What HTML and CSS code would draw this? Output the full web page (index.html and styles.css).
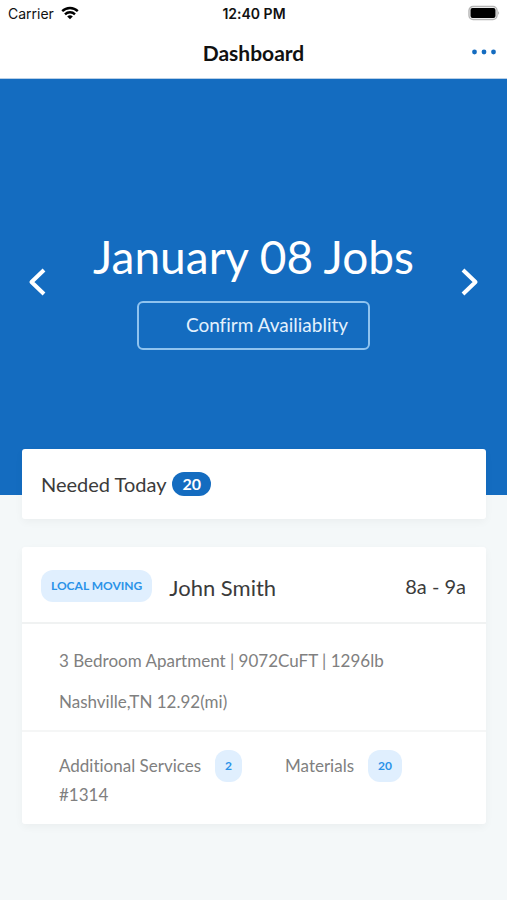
FILE: index.html
```html
<!DOCTYPE html>
<html lang="en">
<head>
    <meta charset="UTF-8">
    <meta name="viewport" content="width=device-width, initial-scale=1.0">
    <title>Dashboard</title>
    <link rel="stylesheet" href="styles.css">
</head>
<body>
    <div class="status">
        <span class="carrier">Carrier
            <svg width="18" height="14" viewBox="0 0 18 14" fill="none" stroke="#000" stroke-width="2.4">
                <path d="M1.2 5.1a11.2 11.2 0 0 1 15.6 0M4 8.3a7.2 7.2 0 0 1 10 0"/>
                <path d="M9 13.2 6.2 10.5a4 4 0 0 1 5.6 0z" fill="#000" stroke="none"/>
            </svg>
        </span>
        <span class="time">12:40 PM</span>
        <svg class="battery" width="32" height="16" viewBox="0 0 32 16">
            <rect x="1" y="1.5" width="28" height="13" rx="4" fill="#fff" stroke="#b5b5b5" stroke-width="1.4"/>
            <rect x="2.5" y="3" width="25" height="10" rx="2" fill="#000"/>
            <path d="M30.3 6q1.7 2 0 4z" fill="#999"/>
        </svg>
    </div>
    <header class="topbar">
        <h1>Dashboard</h1>
        <button class="more" aria-label="More">
            <svg width="24" height="6" viewBox="0 0 24 6" fill="#146cc0">
                <circle cx="2.5" cy="3" r="2.4"/><circle cx="12" cy="3" r="2.4"/><circle cx="21.5" cy="3" r="2.4"/>
            </svg>
        </button>
    </header>

    <section class="hero">
        <button class="arrow" aria-label="Previous day">
            <svg width="18" height="28" viewBox="0 0 18 28" fill="none" stroke="#fff" stroke-width="4" stroke-linejoin="round"><path d="M16 2 3.5 14 16 26"/></svg>
        </button>
        <div class="day">
            <h2>January 08 Jobs</h2>
            <button class="confirm">Confirm Availiablity</button>
        </div>
        <button class="arrow" aria-label="Next day">
            <svg width="18" height="28" viewBox="0 0 18 28" fill="none" stroke="#fff" stroke-width="4" stroke-linejoin="round"><path d="M2 2 14.5 14 2 26"/></svg>
        </button>
    </section>

    <main>
        <section class="card needed">
            <span>Needed Today</span>
            <span class="count">20</span>
        </section>

        <section class="card job">
            <div class="job-head">
                <span class="tag">LOCAL MOVING</span>
                <h3>John Smith</h3>
                <span class="hours">8a - 9a</span>
            </div>
            <div class="details">
                <p>3 Bedroom Apartment | 9072CuFT | 1296lb</p>
                <p>Nashville,TN 12.92(mi)</p>
            </div>
            <div class="extras">
                <div class="services">
                    <div class="extra">Additional Services <span class="tag">2</span></div>
                    <div>#1314</div>
                </div>
                <div class="extra">Materials <span class="tag">20</span></div>
            </div>
        </section>
    </main>
</body>
</html>
```

FILE: styles.css
```css
*{
    box-sizing:border-box;
}

body{
    margin:0;
    background-color:#f4f8f9;
    font-family:Lato, sans-serif;
    font-variant-ligatures:none;
    color:#3b3b3b;
}

h1,h2,h3,p{
    margin:0;
    font-weight:normal;
}

button{
    padding:0;
    border:none;
    background:none;
    font-family:inherit;
    font-variant-ligatures:none;
    cursor:pointer;
}

svg{
    display:block;
}

.status{
    display:grid;
    grid-template-columns:1fr auto 1fr;
    align-items:center;
    height:26px;
    padding:0 7px 0 8px;
    background-color:white;
    color:#111;
    font-family:Inter, sans-serif;
    font-size:14px;
}

.carrier{
    display:flex;
    align-items:center;
    gap:7px;
}

.time{
    font-weight:600;
}

.battery{
    justify-self:end;
}

.topbar{
    display:grid;
    grid-template-columns:1fr auto 1fr;
    align-items:center;
    height:53px;
    padding:0 11px;
    background-color:white;
    border-bottom:1px solid #b8cfe6;
}

.topbar h1{
    grid-column:2;
    font-size:21px;
    font-weight:bold;
    color:#111;
}

.more{
    justify-self:end;
}

.hero{
    display:flex;
    justify-content:space-between;
    align-items:center;
    padding:134px 28px 145px;
    background-color:#146cc0;
    color:white;
}

.day{
    display:flex;
    flex-direction:column;
    align-items:center;
}

.day h2{
    font-size:46px;
    line-height:88px;
}

.confirm{
    height:49px;
    padding:0 20px 2px 47px;
    border:2px solid #8fc3ef;
    border-radius:6px;
    color:#e3f1fd;
    font-size:19px;
}

main{
    padding:0 21px 40px 22px;
}

.card{
    background-color:white;
    border-radius:3px;
    box-shadow:0 3px 8px rgba(0,0,0,0.04);
}

.needed{
    display:flex;
    align-items:center;
    gap:6px;
    height:70px;
    margin-top:-46px;
    margin-bottom:28px;
    padding:0 19px;
    font-size:20px;
}

.count{
    padding:0 10px;
    border-radius:12px;
    background-color:#146cc0;
    color:white;
    font-size:16px;
    font-weight:bold;
    line-height:24px;
}

.job-head{
    display:flex;
    align-items:center;
    height:77px;
    padding:2px 20px 0 19px;
    border-bottom:2px solid #f0f2f2;
}

.tag{
    padding:0 10px;
    border-radius:12px;
    background-color:#e0effe;
    color:#2b93e8;
    font-size:12px;
    font-weight:bold;
    line-height:32px;
}

.job-head h3{
    margin-left:17px;
    padding-top:4px;
    font-size:22px;
}

.hours{
    margin-left:auto;
    font-size:20px;
}

.details,.extras{
    padding:0 37px;
    color:#808080;
    font-size:17px;
}

.details{
    padding-top:16px;
    padding-bottom:8px;
    border-bottom:2px solid #f5f6f6;
    line-height:41px;
}

.extras{
    display:flex;
    gap:43px;
    padding-top:18px;
    padding-bottom:16px;
    line-height:26px;
}

.extra{
    display:flex;
    align-items:center;
    gap:14px;
    height:32px;
}
```
